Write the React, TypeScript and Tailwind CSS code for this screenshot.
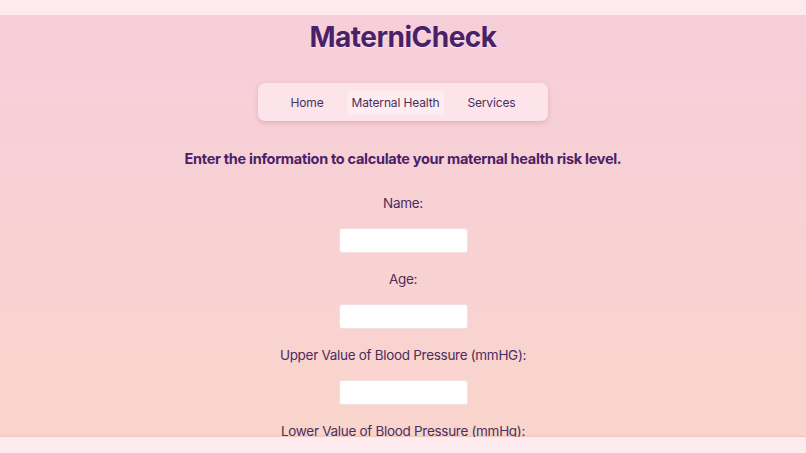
import React from "react";

function Field({ label }: { label: string }) {
  return (
    <div className="flex flex-col items-center">
      <label className="text-[13.5px] leading-[20px] tracking-[-0.3px] text-[#4b2d5e]">{label}</label>
      <input
        type="text"
        className="mt-[15px] mb-[16px] w-[129px] h-[25px] bg-white rounded-[3px] border border-[#f3dfe2] outline-none"
      />
    </div>
  );
}

export default function App() {
  return (
    <div
      className="relative h-[453px] w-full overflow-hidden bg-gradient-to-b from-[#f6cedb] to-[#fad5cb] text-[#4b2d5e]"
      style={{ fontFamily: "Inter, 'Noto Sans', sans-serif" }}
    >
      <div className="absolute top-0 left-0 right-0 h-[15px] bg-[#fde9ee]" />
      <div className="flex flex-col items-center pt-[19px]">
        <h1 className="text-[28px] leading-[36px] font-bold text-[#4a2169] tracking-[-0.5px] [text-shadow:0_1px_1px_rgba(255,255,255,0.6)]">
          MaterniCheck
        </h1>
        <nav className="mt-[28px] w-[290px] h-[38px] pt-[2px] flex items-center justify-center gap-[23px] rounded-[7px] bg-[#fce4ea] shadow-[0_2px_5px_rgba(160,90,110,0.25)] text-[12px] tracking-[-0.15px] text-[#4b2d5e]">
          <span>Home</span>
          <span className="px-[5px] h-[24px] flex items-center rounded-[3px] bg-[#fdedf1]">Maternal Health</span>
          <span>Services</span>
        </nav>
        <p className="mt-[28px] text-[14.5px] leading-[20px] font-bold tracking-[-0.3px] text-[#4a2169]">
          Enter the information to calculate your maternal health risk level.
        </p>
        <div className="mt-[24px] flex flex-col items-center">
          <Field label="Name:" />
          <Field label="Age:" />
          <Field label="Upper Value of Blood Pressure (mmHG):" />
          <Field label="Lower Value of Blood Pressure (mmHg):" />
        </div>
      </div>
      <div className="absolute bottom-0 left-0 right-0 h-[16px] bg-[#fdebef] shadow-[0_-1px_2px_rgba(200,140,130,0.25)]" />
    </div>
  );
}
